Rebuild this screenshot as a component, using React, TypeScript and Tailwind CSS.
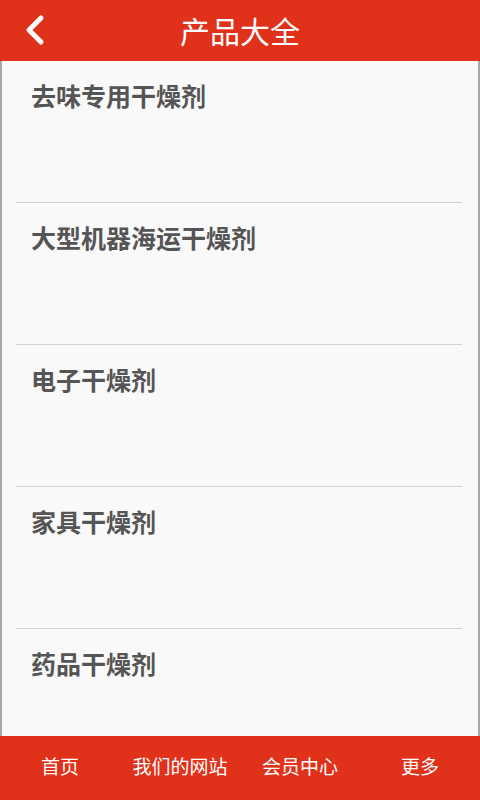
const items = ['去味专用干燥剂', '大型机器海运干燥剂', '电子干燥剂', '家具干燥剂', '药品干燥剂'];

const tabs = ['首页', '我们的网站', '会员中心', '更多'];

const cjk = { fontFamily: '"Noto Sans CJK SC", "DejaVu Sans", sans-serif' };

export default function App() {
  return (
    <div className="flex h-screen w-[480px] flex-col bg-[#f9f9f9]" style={cjk}>
      {/* header */}
      <div className="relative flex h-[61px] shrink-0 items-center justify-center bg-[#e0311b] pb-[2px]">
        <svg className="absolute left-[24px] top-[14px] h-[32px] w-[22px]" viewBox="0 0 22 32" fill="none">
          <path d="M17 4 L5 16 L17 28" stroke="white" strokeWidth="5" strokeLinecap="round" strokeLinejoin="round" />
        </svg>
        <h1 className="text-[30px] leading-none text-white">产品大全</h1>
      </div>

      {/* list */}
      <div className="flex-1 overflow-hidden border-x-2 border-[#a8a8a8] bg-[#f9f9f9]">
        {items.map((item) => (
          <div key={item} className="ml-[14px] mr-[16px] h-[142px] border-b border-[#d2d2d2] pl-[15px] pt-[19px]">
            <span className="text-[25px] font-bold leading-[30px] text-[#555555]">{item}</span>
          </div>
        ))}
      </div>

      {/* bottom bar */}
      <div className="grid h-[64px] shrink-0 grid-cols-4 items-center bg-[#e0311b] pb-[4px]">
        {tabs.map((tab) => (
          <div key={tab} className="text-center text-[19px] text-white">
            {tab}
          </div>
        ))}
      </div>
    </div>
  );
}
